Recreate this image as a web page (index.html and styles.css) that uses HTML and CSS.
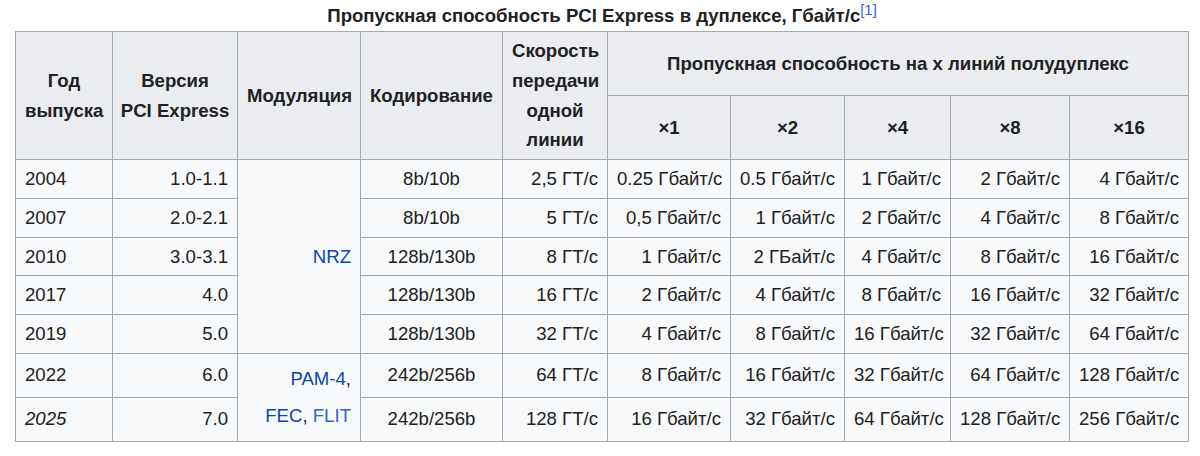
FILE: index.html
```html
<!DOCTYPE html>
<html lang="ru">
<head>
<meta charset="utf-8">
<title>Пропускная способность PCI Express</title>
<link rel="stylesheet" href="styles.css">
</head>
<body>
<table class="wikitable">
  <caption>Пропускная способность PCI Express в дуплексе, Гбайт/с<sup class="ref"><a href="#">[1]</a></sup></caption>
  <colgroup>
    <col class="c-year"><col class="c-ver"><col class="c-mod"><col class="c-enc"><col class="c-speed">
    <col class="c-x1"><col class="c-x2"><col class="c-x4"><col class="c-x8"><col class="c-x16">
  </colgroup>
  <thead>
    <tr>
      <th rowspan="2">Год<br>выпуска</th>
      <th rowspan="2" class="tight">Версия<br><span class="nw">PCI Express</span></th>
      <th rowspan="2">Модуляция</th>
      <th rowspan="2">Кодирование</th>
      <th rowspan="2">Скорость передачи одной линии</th>
      <th colspan="5">Пропускная способность на x линий полудуплекс</th>
    </tr>
    <tr>
      <th>×1</th><th>×2</th><th>×4</th><th>×8</th><th>×16</th>
    </tr>
  </thead>
  <tbody>
    <tr>
      <td>2004</td><td class="r">1.0-1.1</td>
      <td rowspan="5" class="r"><a href="#">NRZ</a></td>
      <td class="c">8b/10b</td><td class="r">2,5 ГТ/с</td>
      <td class="r">0.25 Гбайт/с</td><td class="r">0.5 Гбайт/с</td><td class="r">1 Гбайт/с</td><td class="r">2 Гбайт/с</td><td class="r">4 Гбайт/с</td>
    </tr>
    <tr>
      <td>2007</td><td class="r">2.0-2.1</td>
      <td class="c">8b/10b</td><td class="r">5 ГТ/с</td>
      <td class="r">0,5 Гбайт/с</td><td class="r">1 Гбайт/с</td><td class="r">2 Гбайт/с</td><td class="r">4 Гбайт/с</td><td class="r">8 Гбайт/с</td>
    </tr>
    <tr>
      <td>2010</td><td class="r">3.0-3.1</td>
      <td class="c">128b/130b</td><td class="r">8 ГТ/с</td>
      <td class="r">1 Гбайт/с</td><td class="r">2 ГБайт/с</td><td class="r">4 Гбайт/с</td><td class="r">8 Гбайт/с</td><td class="r">16 Гбайт/с</td>
    </tr>
    <tr>
      <td>2017</td><td class="r">4.0</td>
      <td class="c">128b/130b</td><td class="r">16 ГТ/с</td>
      <td class="r">2 Гбайт/с</td><td class="r">4 Гбайт/с</td><td class="r">8 Гбайт/с</td><td class="r">16 Гбайт/с</td><td class="r">32 Гбайт/с</td>
    </tr>
    <tr>
      <td>2019</td><td class="r">5.0</td>
      <td class="c">128b/130b</td><td class="r">32 ГТ/с</td>
      <td class="r">4 Гбайт/с</td><td class="r">8 Гбайт/с</td><td class="r">16 Гбайт/с</td><td class="r">32 Гбайт/с</td><td class="r">64 Гбайт/с</td>
    </tr>
    <tr>
      <td>2022</td><td class="r">6.0</td>
      <td rowspan="2" class="r pam"><a href="#">PAM-4</a>,<br><a href="#">FEC</a>, <a href="#" class="light">FLIT</a></td>
      <td class="c">242b/256b</td><td class="r">64 ГТ/с</td>
      <td class="r">8 Гбайт/с</td><td class="r">16 Гбайт/с</td><td class="r">32 Гбайт/с</td><td class="r">64 Гбайт/с</td><td class="r">128 Гбайт/с</td>
    </tr>
    <tr>
      <td><i>2025</i></td><td class="r">7.0</td>
      <td class="c">242b/256b</td><td class="r">128 ГТ/с</td>
      <td class="r">16 Гбайт/с</td><td class="r">32 Гбайт/с</td><td class="r">64 Гбайт/с</td><td class="r">128 Гбайт/с</td><td class="r">256 Гбайт/с</td>
    </tr>
  </tbody>
</table>
</body>
</html>
```
FILE: styles.css
```css
html, body {
  margin: 0;
  padding: 0;
  background: #ffffff;
}
body {
  padding: 1px 0 0 15px;
  font-family: "Liberation Sans", Arial, Helvetica, sans-serif;
  font-size: 18.6px;
  line-height: 1.6;
  color: #202122;
}
a {
  color: #0b45b0;
  text-decoration: none;
}
a.light {
  color: #3366cc;
}
.wikitable {
  border-collapse: collapse;
  table-layout: fixed;
  width: 1173px;
  background: #f8f9fa;
  color: #202122;
  border: 1px solid #a2a9b1;
}
.wikitable caption {
  font-weight: bold;
  text-align: center;
  line-height: 30px;
}
.ref {
  font-weight: normal;
  font-size: 0.8em;
  line-height: 1;
  vertical-align: super;
}
.ref a {
  color: #3366cc;
}
.wikitable th,
.wikitable td {
  border: 1px solid #a2a9b1;
  padding: 4px 9px;
  white-space: nowrap;
}
.wikitable th {
  background: #eaecf0;
  font-weight: bold;
  text-align: center;
  white-space: normal;
}
.wikitable th.tight {
  padding-left: 4px;
  padding-right: 4px;
}
.nw { white-space: nowrap; }
.wikitable td.r { text-align: right; }
.wikitable td.c { text-align: center; }
.wikitable td.pam { line-height: 37px; padding-top: 6.5px; padding-bottom: 6.5px; }

.c-year  { width: 97px; }
.c-ver   { width: 125px; }
.c-mod   { width: 123px; }
.c-enc   { width: 142px; }
.c-speed { width: 105px; }
.c-x1    { width: 123px; }
.c-x2    { width: 114px; }
.c-x4    { width: 106px; }
.c-x8    { width: 119px; }
.c-x16   { width: 119px; }
```
